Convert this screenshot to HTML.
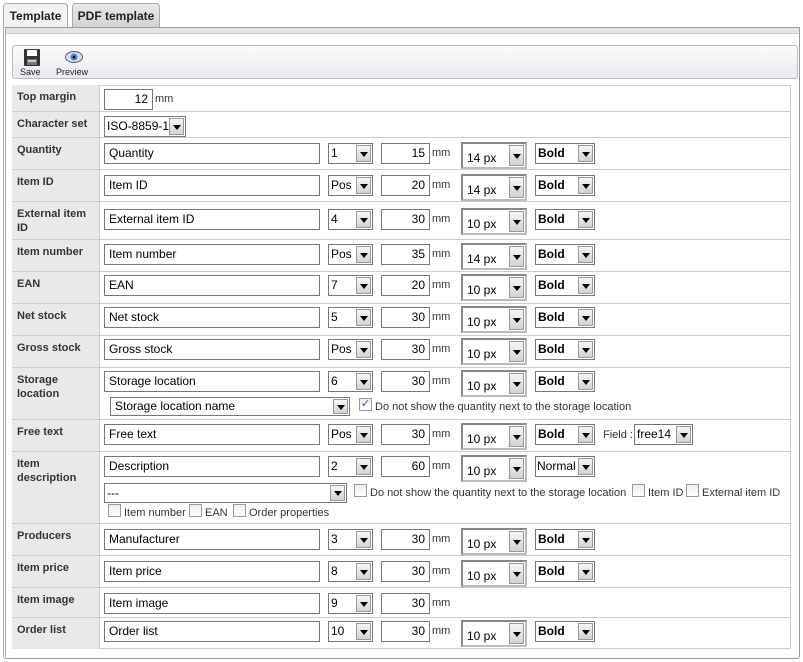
<!DOCTYPE html>
<html><head><meta charset="utf-8"><style>
*{box-sizing:border-box;margin:0;padding:0}
body{width:803px;height:662px;background:#fff;font-family:"Liberation Sans",Arial,sans-serif;position:relative;overflow:hidden;color:#000}
.ab{position:absolute}
.tab{position:absolute;top:3px;height:25px;border:1px solid #aaa;border-bottom:none;border-radius:4px 4px 0 0;font-weight:bold;font-size:12px;line-height:24px;text-align:center;color:#222}
.panel{position:absolute;left:3px;top:27px;width:797px;height:632px;border:1px solid #999;border-left:3px double #aaa;background:#fff;border-radius:0 0 3px 3px}
.band{position:absolute;left:6px;top:28px;width:793px;height:6px;background:#e4e4e4;border-bottom:1px solid #ccc}
.tb{position:absolute;left:12px;top:45px;width:786px;height:34px;border:1px solid #b4bccc;border-radius:3px;background:linear-gradient(#fbfbfb,#e8eaee)}
.tb span{position:absolute;top:21px;font-size:9px;color:#222}
.tbl{position:absolute;left:12px;top:85px;width:779px;height:564px;border:1px solid #ccc}
.row{position:absolute;left:12px;width:779px;border-bottom:1px solid #ccc}
.lab{position:absolute;left:0;top:0;bottom:0;width:88px;background:#e9e9e9;border-right:1px solid #ccc;font-weight:bold;font-size:11px;color:#333;padding:5px 0 0 5px;line-height:14px}
.t{position:absolute;height:21px;border:1px solid #777;background:#fff;font-size:12px;line-height:19px;padding:0 4px;white-space:nowrap;overflow:hidden}
.r{text-align:right}
.s{position:absolute;height:21px;border:1px solid #777;background:#fff;font-size:12px;line-height:19px;padding-left:2px;white-space:nowrap;overflow:hidden}
.s i,.b i{position:absolute;right:1px;top:1px;width:15px;bottom:1px;background:linear-gradient(#f6f6f6,#d2d2d2);border:1px solid #999}
.s i:after,.b i:after{content:"";position:absolute;left:3px;top:50%;margin-top:-2px;border-left:4px solid transparent;border-right:4px solid transparent;border-top:5px solid #000}
.b{position:absolute;height:27px;border:2px solid #888;border-right-color:#bbb;border-bottom-color:#bbb;background:#fff;font-size:12px;line-height:28px;padding-left:4px}
.mm{position:absolute;font-size:11px;color:#333;line-height:21px;margin-top:-4px}
.cb{position:absolute;width:13px;height:13px;border:1px solid #999;background:linear-gradient(#eee,#fff)}
.ct{position:absolute;font-size:11px;color:#333;white-space:nowrap}
.bold{font-weight:bold}
</style></head><body>
<div class="tab" style="left:3px;width:65px;background:#f2f2f2;height:26px">Template</div>
<div class="tab" style="left:72px;width:88px;background:linear-gradient(#eaeaea,#d2d2d2)">PDF template</div>
<div class="panel"></div>
<div class="band"></div>
<div class="tb">
<svg class="ab" style="left:10px;top:3px" width="18" height="17" viewBox="0 0 18 17"><rect x="1" y="0" width="16" height="17" rx="1" fill="#333"/><rect x="4" y="1" width="10" height="6" fill="#fff"/><rect x="4" y="10" width="10" height="6" fill="#777"/><rect x="5" y="11" width="8" height="2" fill="#ccc"/></svg>
<svg class="ab" style="left:52px;top:5px" width="18" height="12" viewBox="0 0 18 12"><ellipse cx="9" cy="6" rx="8.5" ry="5.5" fill="#dde" stroke="#556" stroke-width="1"/><circle cx="9" cy="6" r="3.5" fill="#4a7fd0"/><circle cx="9" cy="6" r="1.3" fill="#113"/></svg>
<span style="left:7px">Save</span><span style="left:43px">Preview</span>
</div>
<div class="tbl"></div>

<div class="row" style="top:85px;height:27px"><div class="lab">Top margin</div>
<div class="t r" style="left:92px;top:4px;width:49px">12</div><div class="mm" style="left:143px;top:8px">mm</div></div>

<div class="row" style="top:112px;height:26px"><div class="lab">Character set</div>
<div class="s" style="left:92px;top:4px;width:82px">ISO-8859-1<i></i></div></div>

<div class="row" style="top:138px;height:32px"><div class="lab">Quantity</div>
<div class="t" style="left:92px;top:5px;width:216px">Quantity</div><div class="s" style="left:316px;top:5px;width:45px">1<i></i></div>
<div class="t r" style="left:369px;top:5px;width:49px">15</div><div class="mm" style="left:420px;top:9px">mm</div>
<div class="b" style="left:449px;top:4px;width:66px">14 px<i></i></div><div class="s bold" style="left:523px;top:5px;width:60px">Bold<i></i></div></div>

<div class="row" style="top:170px;height:32px"><div class="lab">Item ID</div>
<div class="t" style="left:92px;top:5px;width:216px">Item ID</div><div class="s" style="left:316px;top:5px;width:45px">Pos<i></i></div>
<div class="t r" style="left:369px;top:5px;width:49px">20</div><div class="mm" style="left:420px;top:9px">mm</div>
<div class="b" style="left:449px;top:4px;width:66px">14 px<i></i></div><div class="s bold" style="left:523px;top:5px;width:60px">Bold<i></i></div></div>

<div class="row" style="top:202px;height:38px"><div class="lab">External item ID</div>
<div class="t" style="left:92px;top:7px;width:216px">External item ID</div><div class="s" style="left:316px;top:7px;width:45px">4<i></i></div>
<div class="t r" style="left:369px;top:7px;width:49px">30</div><div class="mm" style="left:420px;top:11px">mm</div>
<div class="b" style="left:449px;top:6px;width:66px">10 px<i></i></div><div class="s bold" style="left:523px;top:7px;width:60px">Bold<i></i></div></div>

<div class="row" style="top:240px;height:32px"><div class="lab">Item number</div>
<div class="t" style="left:92px;top:4px;width:216px">Item number</div><div class="s" style="left:316px;top:4px;width:45px">Pos<i></i></div>
<div class="t r" style="left:369px;top:4px;width:49px">35</div><div class="mm" style="left:420px;top:8px">mm</div>
<div class="b" style="left:449px;top:3px;width:66px">14 px<i></i></div><div class="s bold" style="left:523px;top:4px;width:60px">Bold<i></i></div></div>

<div class="row" style="top:272px;height:32px"><div class="lab">EAN</div>
<div class="t" style="left:92px;top:3px;width:216px">EAN</div><div class="s" style="left:316px;top:3px;width:45px">7<i></i></div>
<div class="t r" style="left:369px;top:3px;width:49px">20</div><div class="mm" style="left:420px;top:7px">mm</div>
<div class="b" style="left:449px;top:2px;width:66px">10 px<i></i></div><div class="s bold" style="left:523px;top:3px;width:60px">Bold<i></i></div></div>

<div class="row" style="top:304px;height:32px"><div class="lab">Net stock</div>
<div class="t" style="left:92px;top:3px;width:216px">Net stock</div><div class="s" style="left:316px;top:3px;width:45px">5<i></i></div>
<div class="t r" style="left:369px;top:3px;width:49px">30</div><div class="mm" style="left:420px;top:7px">mm</div>
<div class="b" style="left:449px;top:2px;width:66px">10 px<i></i></div><div class="s bold" style="left:523px;top:3px;width:60px">Bold<i></i></div></div>

<div class="row" style="top:336px;height:32px"><div class="lab">Gross stock</div>
<div class="t" style="left:92px;top:3px;width:216px">Gross stock</div><div class="s" style="left:316px;top:3px;width:45px">Pos<i></i></div>
<div class="t r" style="left:369px;top:3px;width:49px">30</div><div class="mm" style="left:420px;top:7px">mm</div>
<div class="b" style="left:449px;top:2px;width:66px">10 px<i></i></div><div class="s bold" style="left:523px;top:3px;width:60px">Bold<i></i></div></div>

<div class="row" style="top:368px;height:52px"><div class="lab">Storage location</div>
<div class="t" style="left:92px;top:3px;width:216px">Storage location</div><div class="s" style="left:316px;top:3px;width:45px">6<i></i></div>
<div class="t r" style="left:369px;top:3px;width:49px">30</div><div class="mm" style="left:420px;top:7px">mm</div>
<div class="b" style="left:449px;top:2px;width:66px">10 px<i></i></div><div class="s bold" style="left:523px;top:3px;width:60px">Bold<i></i></div>
<div class="s" style="left:98px;top:29px;width:240px;height:19px;line-height:17px;padding-left:4px">Storage location name<i></i></div>
<div class="cb" style="left:347px;top:30px;font-size:11px;line-height:10px;color:#35a;text-align:center">✓</div><div class="ct" style="left:363px;top:33px">Do not show the quantity next to the storage location</div></div>

<div class="row" style="top:420px;height:32px"><div class="lab">Free text</div>
<div class="t" style="left:92px;top:4px;width:216px">Free text</div><div class="s" style="left:316px;top:4px;width:45px">Pos<i></i></div>
<div class="t r" style="left:369px;top:4px;width:49px">30</div><div class="mm" style="left:420px;top:8px">mm</div>
<div class="b" style="left:449px;top:3px;width:66px">10 px<i></i></div><div class="s bold" style="left:523px;top:4px;width:60px">Bold<i></i></div>
<div class="ct" style="left:591px;top:9px">Field :</div><div class="s" style="left:622px;top:4px;width:59px">free14<i></i></div></div>

<div class="row" style="top:452px;height:72px"><div class="lab">Item description</div>
<div class="t" style="left:92px;top:4px;width:216px">Description</div><div class="s" style="left:316px;top:4px;width:45px">2<i></i></div>
<div class="t r" style="left:369px;top:4px;width:49px">60</div><div class="mm" style="left:420px;top:8px">mm</div>
<div class="b" style="left:449px;top:3px;width:66px">10 px<i></i></div><div class="s" style="left:523px;top:4px;width:60px;padding-left:1px">Normal<i></i></div>
<div class="s" style="left:92px;top:31px;width:243px;height:20px;line-height:18px">---<i></i></div>
<div class="cb" style="left:342px;top:32px"></div><div class="ct" style="left:358px;top:35px">Do not show the quantity next to the storage location</div>
<div class="cb" style="left:620px;top:32px"></div><div class="ct" style="left:636px;top:35px">Item ID</div>
<div class="cb" style="left:674px;top:32px"></div><div class="ct" style="left:690px;top:35px">External item ID</div>
<div class="cb" style="left:96px;top:52px"></div><div class="ct" style="left:112px;top:55px">Item number</div>
<div class="cb" style="left:177px;top:52px"></div><div class="ct" style="left:193px;top:55px">EAN</div>
<div class="cb" style="left:221px;top:52px"></div><div class="ct" style="left:237px;top:55px">Order properties</div></div>

<div class="row" style="top:524px;height:32px"><div class="lab">Producers</div>
<div class="t" style="left:92px;top:5px;width:216px">Manufacturer</div><div class="s" style="left:316px;top:5px;width:45px">3<i></i></div>
<div class="t r" style="left:369px;top:5px;width:49px">30</div><div class="mm" style="left:420px;top:9px">mm</div>
<div class="b" style="left:449px;top:4px;width:66px">10 px<i></i></div><div class="s bold" style="left:523px;top:5px;width:60px">Bold<i></i></div></div>

<div class="row" style="top:556px;height:32px"><div class="lab">Item price</div>
<div class="t" style="left:92px;top:5px;width:216px">Item price</div><div class="s" style="left:316px;top:5px;width:45px">8<i></i></div>
<div class="t r" style="left:369px;top:5px;width:49px">30</div><div class="mm" style="left:420px;top:9px">mm</div>
<div class="b" style="left:449px;top:4px;width:66px">10 px<i></i></div><div class="s bold" style="left:523px;top:5px;width:60px">Bold<i></i></div></div>

<div class="row" style="top:588px;height:30px"><div class="lab">Item image</div>
<div class="t" style="left:92px;top:5px;width:216px">Item image</div><div class="s" style="left:316px;top:5px;width:45px">9<i></i></div>
<div class="t r" style="left:369px;top:5px;width:49px">30</div><div class="mm" style="left:420px;top:9px">mm</div></div>

<div class="row" style="top:618px;height:31px;border-bottom:none"><div class="lab">Order list</div>
<div class="t" style="left:92px;top:3px;width:216px">Order list</div><div class="s" style="left:316px;top:3px;width:45px">10<i></i></div>
<div class="t r" style="left:369px;top:3px;width:49px">30</div><div class="mm" style="left:420px;top:7px">mm</div>
<div class="b" style="left:449px;top:2px;width:66px">10 px<i></i></div><div class="s bold" style="left:523px;top:3px;width:60px">Bold<i></i></div></div>
</body></html>
